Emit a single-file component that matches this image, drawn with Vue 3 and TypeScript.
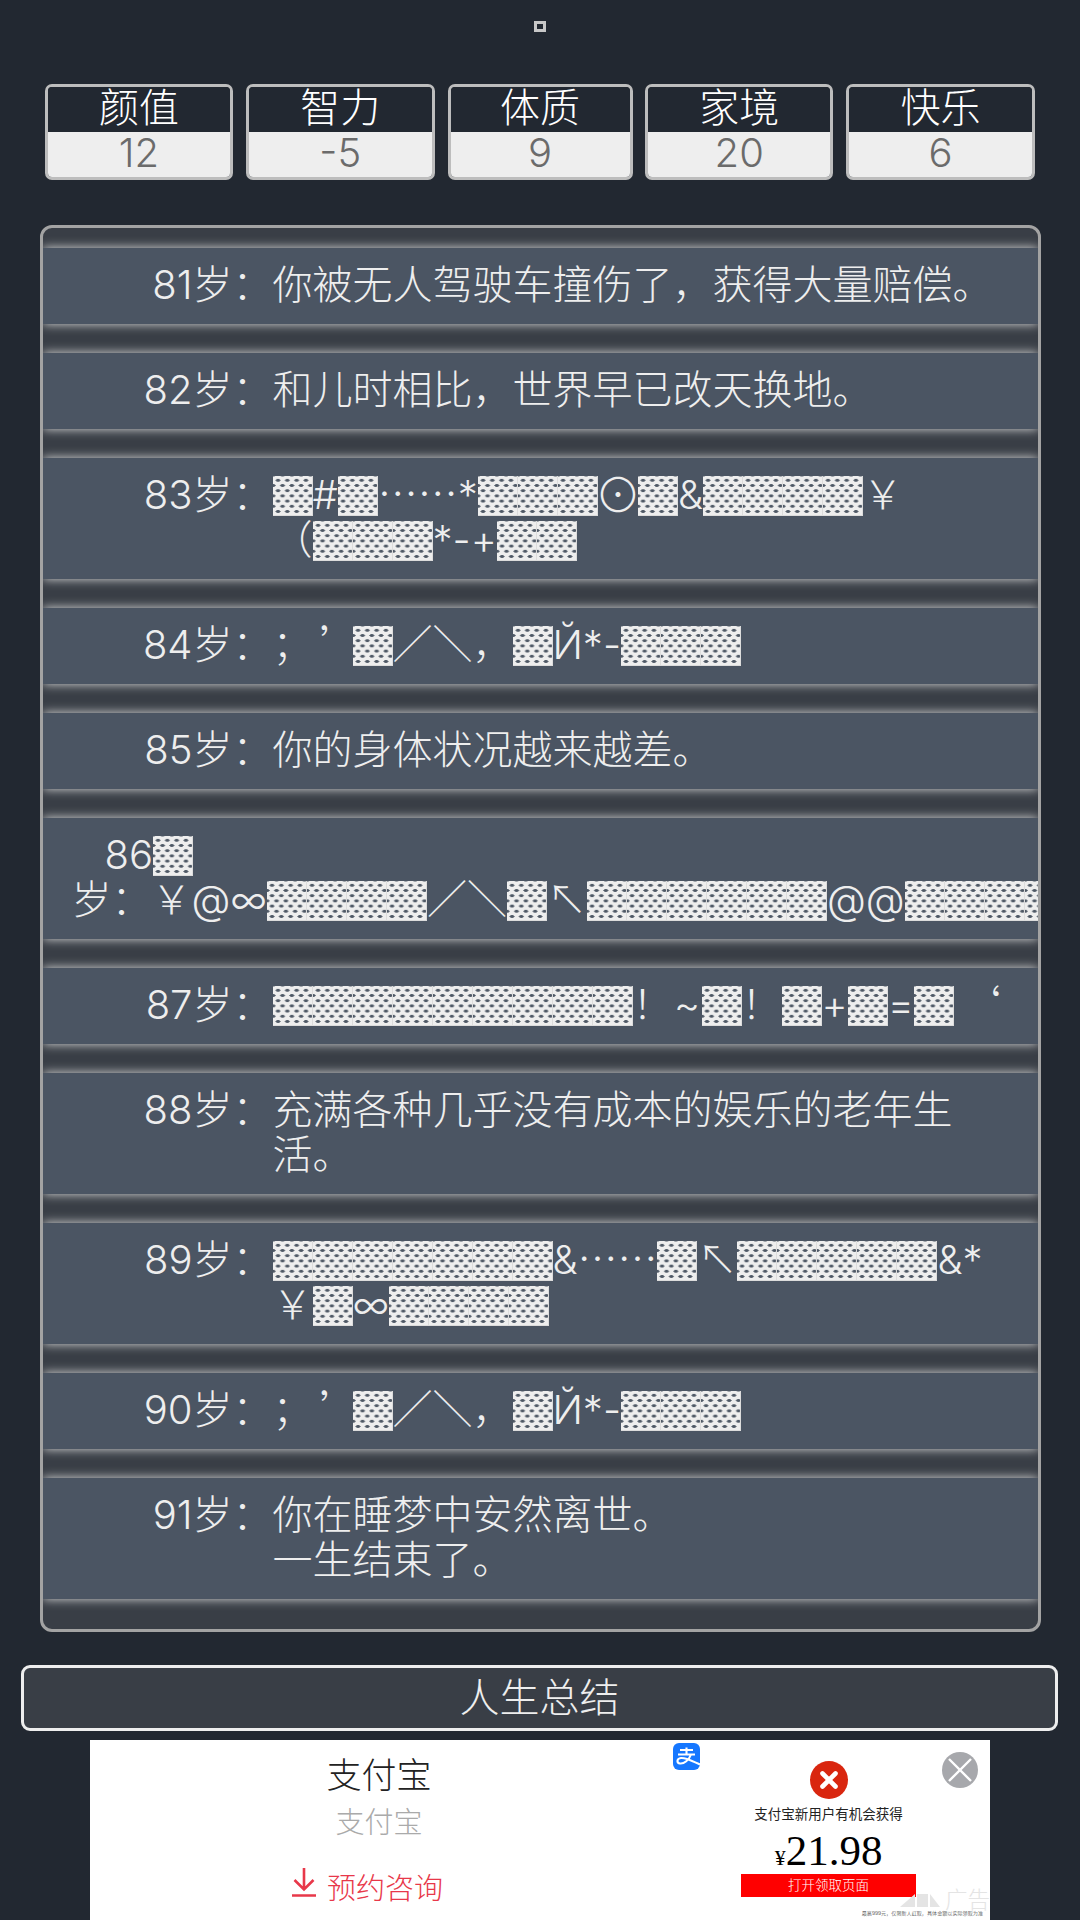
<script setup lang="ts">
interface Stat { name: string; value: string; width: string }
interface Row { age: string; text: string; broken?: boolean }
interface Part { t: string; k: string }

const B = '▒'
const stats: Stat[] = [
  { name: '颜值', value: '12', width: '188px' },
  { name: '智力', value: '-5', width: '189px' },
  { name: '体质', value: '9', width: '185px' },
  { name: '家境', value: '20', width: '188px' },
  { name: '快乐', value: '6', width: '189px' },
]
const rows: Row[] = [
  { age: '81岁：', text: '你被无人驾驶车撞伤了，获得大量赔偿。' },
  { age: '82岁：', text: '和儿时相比，世界早已改天换地。' },
  { age: '83岁：', text: `${B}#${B}……*${B}${B}${B}⊙${B}&${B}${B}${B}${B}￥\n（${B}${B}${B}*-+${B}${B}` },
  { age: '84岁：', text: `；’${B}／＼，${B}Й*-${B}${B}${B}` },
  { age: '85岁：', text: '你的身体状况越来越差。' },
  {
    age: `86${B}\n岁：`,
    text: `￥@∞${B.repeat(4)}／＼${B}↖${B.repeat(6)}@@${B.repeat(6)}`,
    broken: true,
  },
  { age: '87岁：', text: `${B.repeat(9)}！~${B}！${B}+${B}=${B}‘` },
  { age: '88岁：', text: '充满各种几乎没有成本的娱乐的老年生\n活。' },
  { age: '89岁：', text: `${B.repeat(7)}&……${B}↖${B.repeat(5)}&*\n￥${B}∞${B.repeat(4)}` },
  { age: '90岁：', text: `；’${B}／＼，${B}Й*-${B}${B}${B}` },
  { age: '91岁：', text: '你在睡梦中安然离世。\n一生结束了。' },
]

const kinds: Record<string, string> = {
  '▒': 'block',
  '……': 'cjk',
  '↖': 'cjk',
  '’': 'quote',
  '‘': 'quote',
  '~': 'tilde',
  '⊙': 'circle',
}

function parts(s: string): Part[] {
  return s
    .split(/(▒|……|↖|’|‘|~|⊙)/)
    .filter((piece) => piece !== '')
    .map((piece) => ({ t: piece, k: kinds[piece] ?? 'plain' }))
}
</script>

<template>
  <main class="page">
    <div class="top-mark"><i class="top-box"></i></div>
    <section class="stats">
      <div v-for="s in stats" :key="s.name" class="stat" :style="{ width: s.width }">
        <div class="stat-name">{{ s.name }}</div>
        <div class="stat-value">{{ s.value }}</div>
      </div>
    </section>

    <ul class="life">
      <li v-for="r in rows" :key="r.age" class="row" :class="{ 'row-broken': r.broken }">
        <span class="age"><span v-for="(p, i) in parts(r.age)" :key="i" :class="p.k">{{ p.t }}</span></span>
        <span class="text"><span v-for="(p, i) in parts(r.text)" :key="i" :class="p.k">{{ p.t }}</span></span>
      </li>
    </ul>

    <button class="summary">人生总结</button>

    <section class="ad">
      <div class="ad-left">
        <div class="ad-title">支付宝</div>
        <div class="ad-sub">支付宝</div>
        <div class="ad-cta">
          <svg class="ad-arrow" viewBox="0 0 24 29" width="24" height="29">
            <path d="M12 0V21M2.5 12L12 21.5L21.5 12M0 27.5H24" fill="none" stroke="#e8384a" stroke-width="2.6" />
          </svg>
          <span class="ad-cta-text">预约咨询</span>
        </div>
      </div>
      <svg class="ad-logo" viewBox="0 0 27 27" width="27" height="27">
        <rect width="27" height="27" rx="6" fill="#1677ff" />
        <path
          d="M7 7H20M13.5 4.5V11M5 11.5H22M18 11.5C16 17 11 21 7 20.5C3.5 20 3.5 15.5 8 15C13 14.5 19 18 27 21.5"
          fill="none"
          stroke="#fff"
          stroke-width="2.1"
        />
      </svg>
      <div class="ad-right">
        <svg class="ad-err" viewBox="0 0 38 38" width="38" height="38">
          <circle cx="19" cy="19" r="19" fill="#d9260f" />
          <path d="M12.5 12.5L25.5 25.5M25.5 12.5L12.5 25.5" stroke="#fff" stroke-width="4.6" stroke-linecap="round" />
        </svg>
        <div class="ad-line">支付宝新用户有机会获得</div>
        <div class="ad-price"><span class="yen">¥</span>21.98</div>
        <div class="ad-btn">打开领取页面</div>
        <div class="ad-fine">最高999元，仅限新人红取，具体金额以实际领取为准</div>
      </div>
      <svg class="ad-close" viewBox="0 0 36 36" width="36" height="36">
        <circle cx="18" cy="18" r="18" fill="#a7a8ac" />
        <path d="M7 7L29 29M29 7L7 29" stroke="#fff" stroke-width="2.4" />
      </svg>
      <div class="ad-mark">
        <svg viewBox="0 0 40 13" width="40" height="13">
          <path d="M0 13L15 0V13ZM17 0H28V13H17ZM30 0L40 13H30Z" fill="#e4e4e4" />
        </svg>
        <span>广告</span>
      </div>
    </section>
  </main>
</template>

<style>
html, body { margin: 0; background: #222831; }
</style>

<style scoped>
.page {
  width: 1080px;
  height: 1920px;
  overflow: hidden;
  background: #222831;
  color: #eeeeee;
  font-family: "Inter", "Noto Sans CJK SC", "Liberation Sans", sans-serif;
  font-weight: 300;
  display: flex;
  flex-direction: column;
  align-items: center;
}
.top-mark {
  height: 84px;
  padding-top: 21px;
  box-sizing: border-box;
}
.top-box {
  display: block;
  box-sizing: border-box;
  width: 12px;
  height: 11px;
  border: 3px solid #c8c8c8;
}
.stats {
  display: flex;
  gap: 12.75px;
}
.stat {
  box-sizing: border-box;
  height: 96px;
  border: 3px solid #bdbdbd;
  border-radius: 7px;
  overflow: hidden;
  font-size: 40px;
  text-align: center;
}
.stat-name {
  height: 45px;
  line-height: 41px;
  color: #fff;
  background: #222831;
}
.stat-value {
  height: 45px;
  line-height: 41px;
  color: #6b6b6b;
  background: #eeeeee;
}
.life {
  box-sizing: border-box;
  width: 1001px;
  height: 1407px;
  margin: 45px 0 0;
  padding: 20px 0 0;
  list-style: none;
  border: 3px solid #a3a3a3;
  border-radius: 12px;
  background: #393e46;
  overflow: hidden;
}
.row {
  display: flex;
  padding: 14px 0 17px;
  margin-bottom: 29px;
  background: #4b5563;
  box-shadow: 0 0 10px #dddddd;
  font-size: 40px;
  line-height: 45px;
  white-space: pre;
}
.age {
  flex: 0 0 230px;
  text-align: right;
}
.text {
  flex: 1;
  min-width: 0;
}
.row-broken .age {
  flex: 0 0 80px;
  min-width: 0;
  padding-left: 29px;
  text-align: left;
  text-indent: 33px;
}
.row-broken .text {
  margin-top: 45px;
  overflow: hidden;
}
.block {
  display: inline-block;
  width: 40px;
  height: 40px;
  margin-top: 4px;
  vertical-align: top;
  color: transparent;
  line-height: 40px;
  text-indent: 0;
  background-color: #eeeeee;
  background-image:
    radial-gradient(ellipse 2.6px 1.3px at center, #4f5966 85%, transparent 100%),
    radial-gradient(ellipse 2.6px 1.3px at center, #4f5966 85%, transparent 100%);
  background-size: 9.3px 10.4px;
  background-position: 0.4px -0.9px, 4.9px 4.3px;
  box-shadow: inset -1px -1px 0 #dcdcdc;
}
.cjk {
  font-family: "Noto Sans CJK SC", sans-serif;
  line-height: 0;
}
.quote {
  display: inline-block;
  box-sizing: border-box;
  width: 40px;
  padding-left: 7px;
  text-indent: 0;
  line-height: 0;
  font-family: "Noto Sans CJK SC", sans-serif;
}
.tilde {
  display: inline-block;
  width: 29px;
  text-align: center;
  text-indent: 0;
  line-height: 0;
}
.circle {
  display: inline-block;
  font-family: "Noto Sans CJK SC", sans-serif;
  transform: scale(1.16);
  text-indent: 0;
  line-height: 0;
}
.summary {
  box-sizing: border-box;
  width: 1037px;
  height: 66px;
  margin: 33px 1px 9px 0;
  padding: 0;
  border: 3px solid #eeeeee;
  border-radius: 9px;
  background: #393e46;
  color: #eeeeee;
  font: inherit;
  font-size: 40px;
  line-height: 58px;
}
.ad {
  position: relative;
  flex: 0 0 180px;
  width: 900px;
  background: #fff;
  overflow: hidden;
}
.ad-left {
  position: absolute;
  left: 189px;
  top: 0;
  width: 200px;
  text-align: center;
}
.ad-title {
  margin-top: 12px;
  font-size: 35px;
  line-height: 46px;
  color: #222;
}
.ad-sub {
  margin-top: 3px;
  font-size: 29px;
  line-height: 44px;
  color: #aaa;
}
.ad-cta {
  display: flex;
  align-items: flex-start;
  gap: 11px;
  padding-left: 13px;
  margin-top: 18px;
  font-size: 29px;
  line-height: 40px;
  color: #e8384a;
}
.ad-arrow { margin-top: 5px; }
.ad-cta-text { margin-top: 6px; }
.ad-logo {
  position: absolute;
  left: 583px;
  top: 3px;
}
.ad-right {
  position: absolute;
  left: 620px;
  top: 21px;
  width: 237px;
  display: flex;
  flex-direction: column;
  align-items: center;
  color: #222;
}
.ad-line {
  margin-top: 5px;
  font-size: 13.5px;
  line-height: 20px;
  font-weight: 400;
}
.ad-price {
  font-family: "Liberation Serif", serif;
  font-size: 43px;
  line-height: 32px;
  margin-top: 11px;
  color: #000;
  font-weight: 400;
}
.yen { font-size: 22px; }
.ad-btn {
  width: 175px;
  height: 23px;
  background: #ff0000;
  color: #fff;
  font-size: 13.5px;
  line-height: 23px;
  text-align: center;
}
.ad-fine {
  align-self: flex-end;
  margin: 12px -36px 0 0;
  font-size: 5.1px;
  line-height: 8px;
  white-space: nowrap;
}
.ad-close {
  position: absolute;
  left: 852px;
  top: 12px;
}
.ad-err { display: block; }
.ad-mark {
  position: absolute;
  right: 0;
  top: 148px;
  display: flex;
  align-items: center;
  gap: 5px;
  color: #e4e4e4;
  font-size: 22.5px;
  line-height: 24px;
}
</style>
